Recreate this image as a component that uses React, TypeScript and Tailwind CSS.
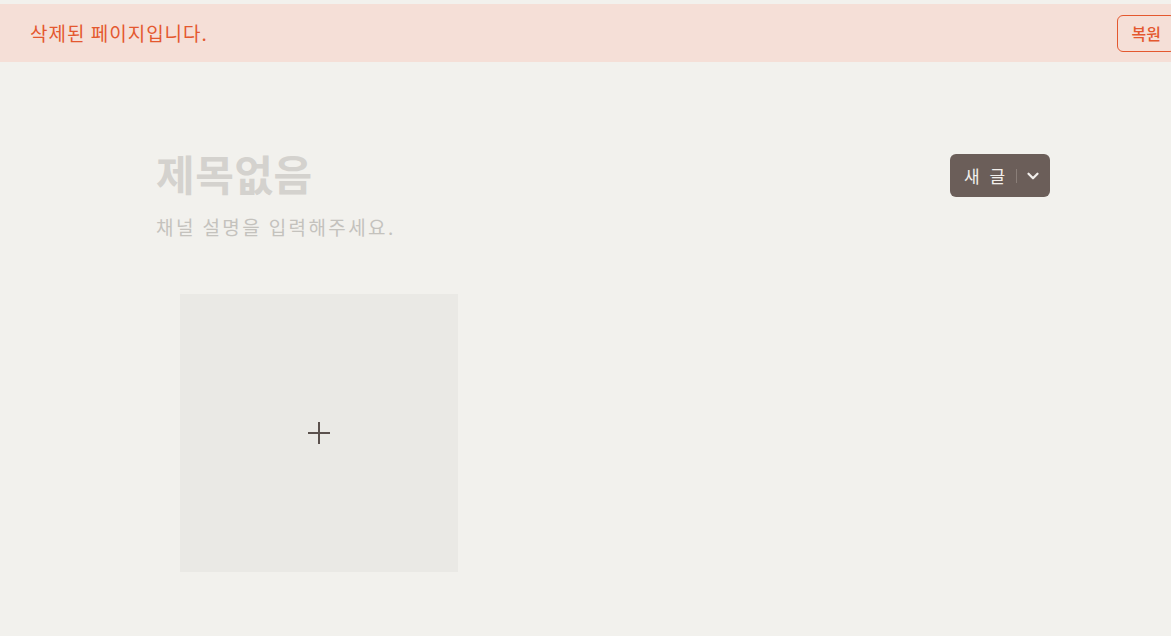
import { ChevronDown } from "lucide-react";

const font = { fontFamily: '"Noto Sans CJK KR", "Noto Sans", sans-serif' };

export default function App() {
  return (
    <div className="min-h-screen w-full overflow-hidden bg-[#f2f1ed] pt-[4px]" style={font}>
      <div className="flex h-[58px] items-center justify-between bg-[#f5dfd7] pl-[30px]">
        <span className="text-[19px] tracking-[1px] text-[#e4582f]">삭제된 페이지입니다.</span>
        <button className="-mr-[5px] h-[37px] shrink-0 rounded-[6px] border border-[#e4582f] px-[14px] text-[16px] font-medium text-[#e4582f]">
          복원
        </button>
      </div>

      <div className="ml-[156px] w-[894px] pt-[84px]">
        <div className="flex items-start justify-between">
          <div>
            <h1 className="text-[42px] font-bold leading-[54px] tracking-[0.5px] text-[#d4d2ce]">제목없음</h1>
            <p className="mt-[13px] text-[19px] leading-[27px] tracking-[2.4px] text-[#c4c2bd]">채널 설명을 입력해주세요.</p>
          </div>
          <div className="mt-[8px] flex h-[43px] w-[100px] shrink-0 items-center rounded-[6px] bg-[#6b5e59] pl-[14px] text-[#f2efec]">
            <span className="w-[44px] shrink-0 whitespace-nowrap text-[17px] tracking-[3px]">새 글</span>
            <span className="ml-[8px] h-[14px] w-px shrink-0 bg-[#8a7e78]" />
            <ChevronDown className="ml-[7px] h-[18px] w-[18px] shrink-0" strokeWidth={3} />
          </div>
        </div>

        <div className="ml-[24px] mt-[54px] flex h-[278px] w-[278px] items-center justify-center bg-[#eae9e5]">
          <svg width="22" height="22" viewBox="0 0 22 22" className="text-[#5b514d]">
            <path d="M11 0v22M0 11h22" stroke="currentColor" strokeWidth="2" />
          </svg>
        </div>
      </div>
    </div>
  );
}
